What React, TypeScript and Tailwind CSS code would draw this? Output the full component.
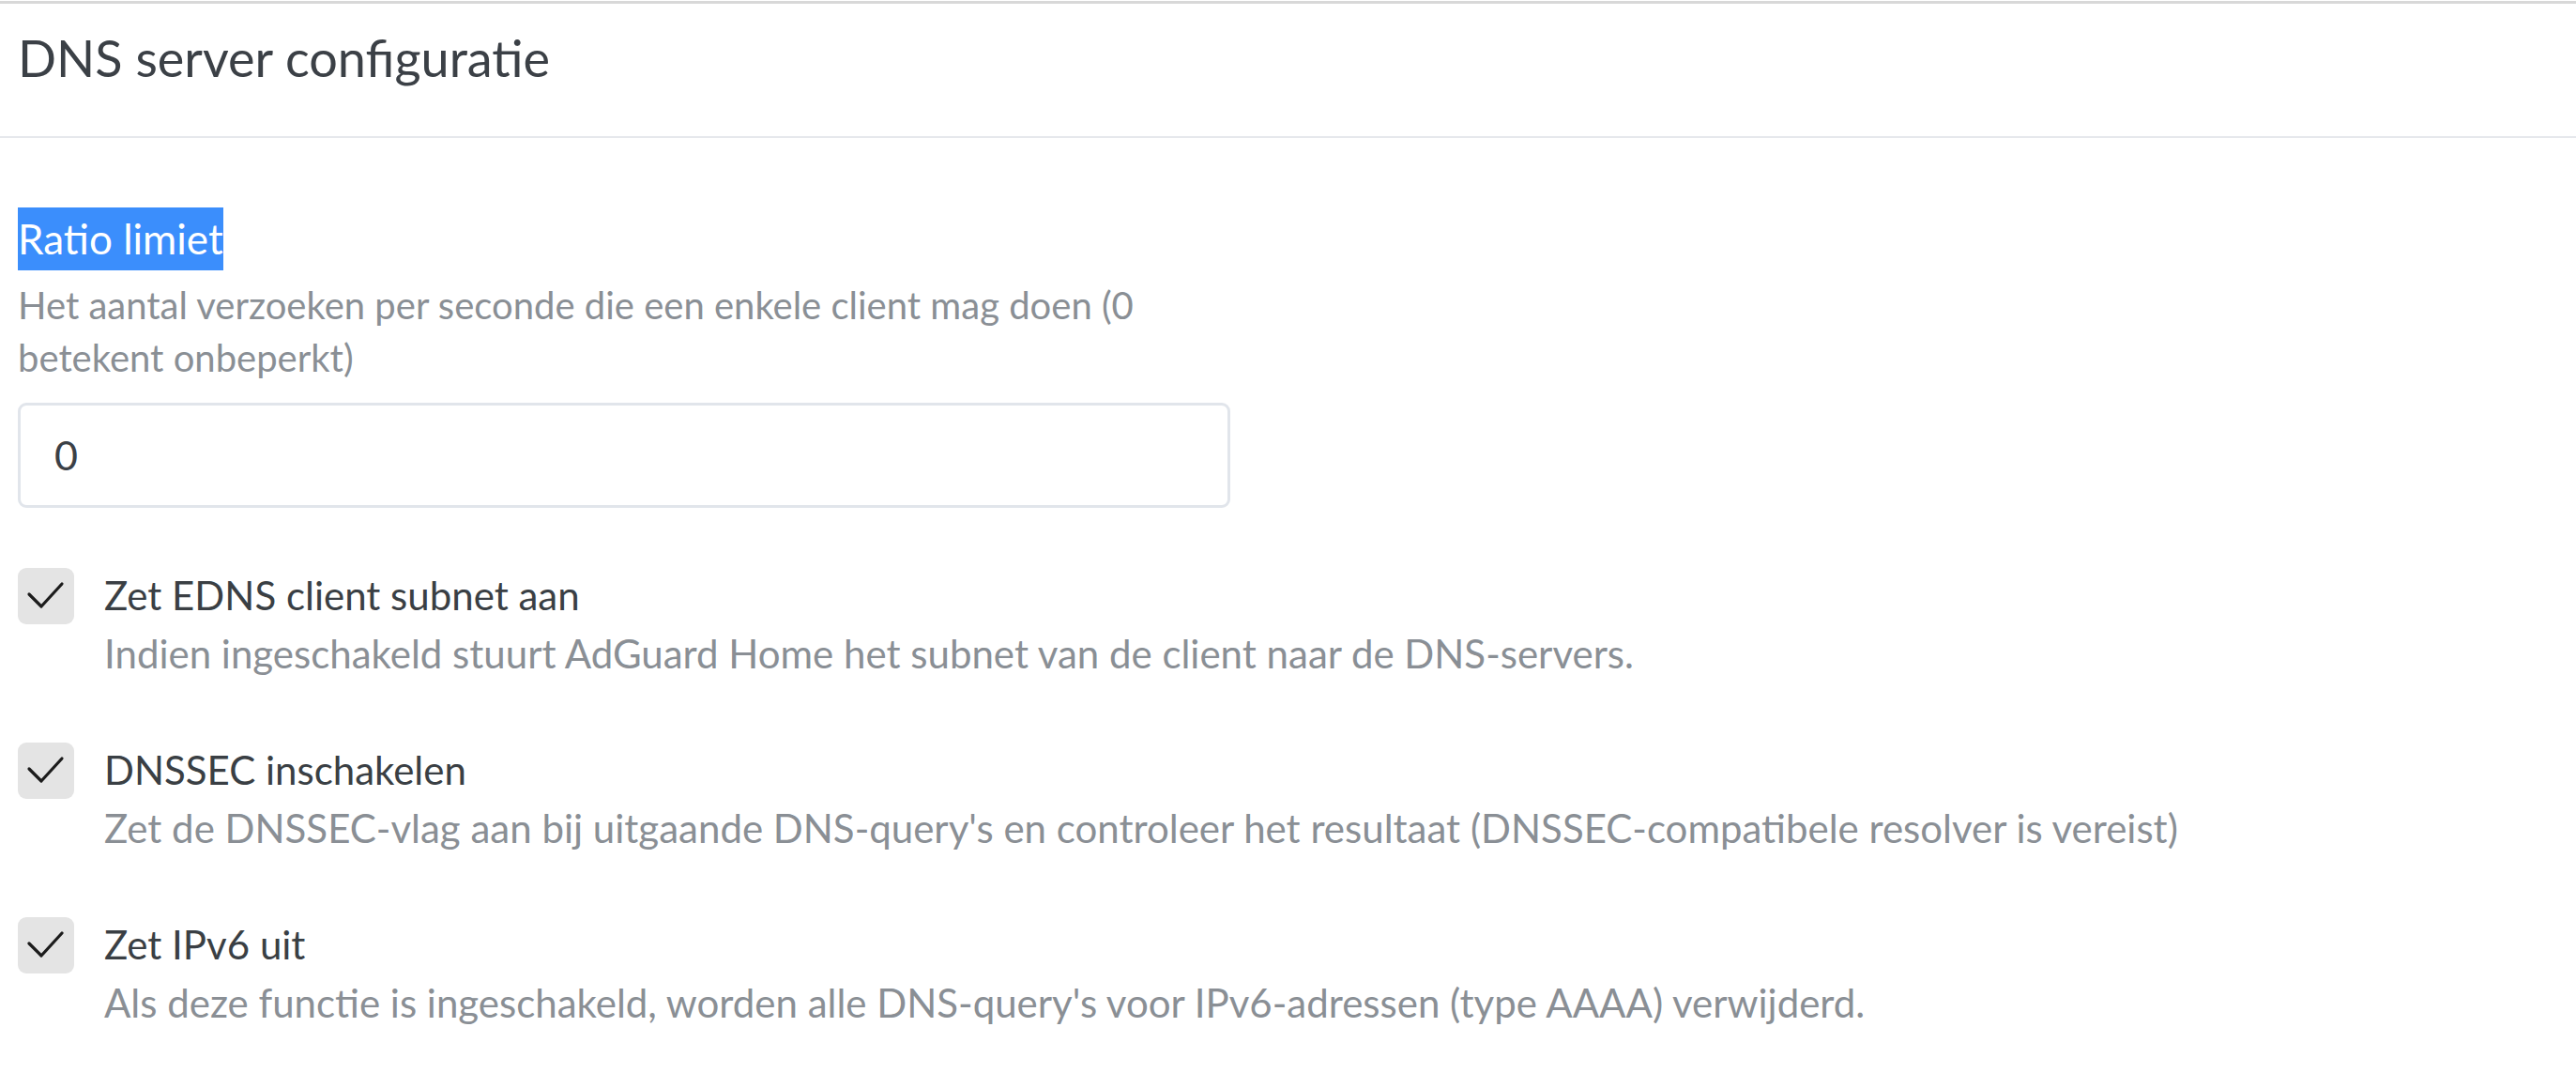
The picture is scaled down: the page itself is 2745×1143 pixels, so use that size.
import React from "react";

type Option = {
  label: string;
  hint: string;
};

const options: Option[] = [
  {
    label: "Zet EDNS client subnet aan",
    hint: "Indien ingeschakeld stuurt AdGuard Home het subnet van de client naar de DNS-servers.",
  },
  {
    label: "DNSSEC inschakelen",
    hint: "Zet de DNSSEC-vlag aan bij uitgaande DNS-query's en controleer het resultaat (DNSSEC-compatibele resolver is vereist)",
  },
  {
    label: "Zet IPv6 uit",
    hint: "Als deze functie is ingeschakeld, worden alle DNS-query's voor IPv6-adressen (type AAAA) verwijderd.",
  },
];

const CheckBox = () => (
  <div className="h-[60px] w-[60px] shrink-0 rounded-[9px] bg-[#e4e4e4]">
    <svg width="60" height="60" viewBox="0 0 60 60" fill="none">
      <polyline
        points="12,28 25,41 47,17"
        stroke="#1c1c1c"
        strokeWidth="3.2"
        strokeLinecap="round"
        strokeLinejoin="round"
      />
    </svg>
  </div>
);

const App: React.FC = () => {
  return (
    <div className="min-h-[1143px] w-full bg-white pt-[1px] font-['Lato',sans-serif]">
      <div className="border-t-[3px] border-[#d8d8d8]">
        {/* card header */}
        <div className="h-[143px] border-b-[2px] border-[#e6e8ec] pl-[19px] pt-[31px]">
          <h2 className="text-[54px] leading-none text-[#3b4046]">
            DNS server configuratie
          </h2>
        </div>

        {/* card body */}
        <div className="pl-[19px] pt-[74px]">
          <div className="w-[1292px]">
            <label className="inline-block bg-[#3b8efc] text-[44px] leading-[67px] text-white">
              Ratio limiet
            </label>
            <div className="mt-[9px] text-[40px] leading-[56px] text-[#8a8f95]">
              <div className="whitespace-nowrap">
                Het aantal verzoeken per seconde die een enkele client mag doen (0
              </div>
              <div className="whitespace-nowrap">betekent onbeperkt)</div>
            </div>
            <div className="mt-[20px] flex h-[112px] items-center rounded-[9px] border-[3px] border-[#e1e5eb] px-[36px] text-[43px] text-[#3b4046]">
              0
            </div>
          </div>

          <div className="mt-[64px] flex flex-col gap-[64px]">
            {options.map((opt) => (
              <div key={opt.label} className="flex items-start gap-[32px]">
                <CheckBox />
                <div className="-mt-[2px] flex flex-col">
                  <span className="text-[42px] leading-[62px] text-[#3a3f44]">
                    {opt.label}
                  </span>
                  <span className="whitespace-nowrap text-[42px] leading-[62px] text-[#8a8f95]">
                    {opt.hint}
                  </span>
                </div>
              </div>
            ))}
          </div>
        </div>
      </div>
    </div>
  );
};

export default App;
